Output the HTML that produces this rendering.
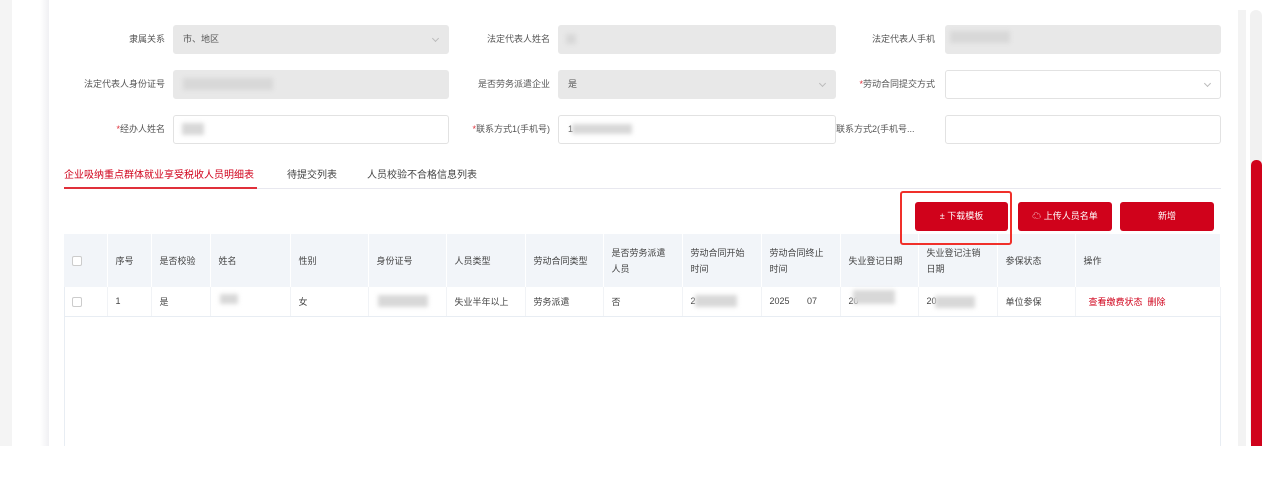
<!DOCTYPE html>
<html><head><meta charset="utf-8"><style>
*{margin:0;padding:0;box-sizing:border-box}
body{width:1280px;height:488px;background:#fff;position:relative;overflow:hidden;font-family:"Liberation Sans","Noto Sans CJK SC",sans-serif;font-size:9px;color:#555}
.a{position:absolute}
.lbl{position:absolute;text-align:right;color:#555;font-size:9px;line-height:28px;white-space:nowrap}
.lbl i{color:#e0303a;font-style:normal}
.inp{position:absolute;height:29px;border:1px solid #e2e2e2;border-radius:3px;background:#fff;font-size:9px;line-height:27px;padding-left:9px;color:#555}
.dis{background:#e8e8e8;border-color:#e8e8e8}
.blur{position:absolute;background:#d8d8d8;filter:blur(2px)}
.arr{position:absolute;right:10px;top:10px;width:5px;height:5px;border-right:1px solid #bbb;border-bottom:1px solid #bbb;transform:rotate(45deg)}
.btn{position:absolute;top:202px;height:29px;background:#d0021b;border-radius:3px;color:#fff;font-size:9px;line-height:29px;text-align:center}
table{position:absolute;left:64px;top:234px;width:1157px;border-collapse:collapse;font-size:9px}
th{background:#f2f5f9;height:53px;text-align:left;font-weight:normal;color:#444;padding-left:8px;border-right:1px solid #fff;line-height:16px}
td{height:29px;padding-left:8px;color:#444;border-bottom:1px solid #e8edf3;border-right:1px solid #f1f3f6}
.cb{display:inline-block;width:10px;height:10px;border:1px solid #ccc;border-radius:2px;background:#fff;vertical-align:middle}
</style></head><body>
<div class="a" style="left:0;top:0;width:12px;height:446px;background:#f4f4f4"></div>
<div class="a" style="left:40px;top:0;width:9px;height:446px;background:linear-gradient(90deg,#fff,#f0f0f3)"></div>
<div class="a" style="left:1238px;top:10px;width:8px;height:436px;background:#f3f3f3"></div>
<div class="a" style="left:1250px;top:10px;width:12px;height:436px;background:#f1f1f1;border-radius:6px"></div>
<div class="a" style="left:1251px;top:160px;width:11px;height:286px;background:#d0021b;border-radius:5px 5px 0 0"></div>

<div class="lbl" style="left:60px;width:105px;top:25px">隶属关系</div>
<div class="inp dis" style="left:173px;top:25px;width:276px">市、地区<span class="arr"></span></div>
<div class="lbl" style="left:440px;width:110px;top:25px">法定代表人姓名</div>
<div class="inp dis" style="left:558px;top:25px;width:278px"></div>
<div class="blur" style="left:566px;top:34px;width:10px;height:10px"></div>
<div class="lbl" style="left:820px;width:115px;top:25px">法定代表人手机</div>
<div class="inp dis" style="left:945px;top:25px;width:276px"></div>
<div class="blur" style="left:950px;top:31px;width:60px;height:12px"></div>

<div class="lbl" style="left:60px;width:105px;top:70px">法定代表人身份证号</div>
<div class="inp dis" style="left:173px;top:70px;width:276px"></div>
<div class="blur" style="left:183px;top:78px;width:90px;height:12px"></div>
<div class="lbl" style="left:440px;width:110px;top:70px">是否劳务派遣企业</div>
<div class="inp dis" style="left:558px;top:70px;width:278px">是<span class="arr"></span></div>
<div class="lbl" style="left:820px;width:115px;top:70px"><i>*</i>劳动合同提交方式</div>
<div class="inp" style="left:945px;top:70px;width:276px"><span class="arr"></span></div>

<div class="lbl" style="left:60px;width:105px;top:115px"><i>*</i>经办人姓名</div>
<div class="inp" style="left:173px;top:115px;width:276px"></div>
<div class="blur" style="left:182px;top:123px;width:22px;height:12px"></div>
<div class="lbl" style="left:440px;width:110px;top:115px"><i>*</i>联系方式1(手机号)</div>
<div class="inp" style="left:558px;top:115px;width:278px">1</div>
<div class="blur" style="left:572px;top:124px;width:60px;height:10px"></div>
<div class="lbl" style="left:836px;width:105px;top:115px;text-align:left">联系方式2(手机号...</div>
<div class="inp" style="left:945px;top:115px;width:276px"></div>

<div class="a" style="left:64px;top:166px;font-size:10px;color:#d0021b">企业吸纳重点群体就业享受税收人员明细表</div>
<div class="a" style="left:287px;top:166px;font-size:10px;color:#444">待提交列表</div>
<div class="a" style="left:367px;top:166px;font-size:10px;color:#444">人员校验不合格信息列表</div>
<div class="a" style="left:64px;top:188px;width:1157px;height:1px;background:#e8e8ef"></div>
<div class="a" style="left:64px;top:187px;width:193px;height:2px;background:#e0303a"></div>

<div class="btn" style="left:915px;width:93px">± 下载模板</div>
<div class="btn" style="left:1018px;width:94px">☁ 上传人员名单</div>
<div class="btn" style="left:1120px;width:94px">新增</div>

<div class="a" style="left:64px;top:234px;width:1157px;height:212px;border:1px solid #e8edf3;border-bottom:none"></div>
<table>
<tr><th style="width:43px"><span class="cb"></span></th><th style="width:44px">序号</th><th style="width:59px">是否校验</th><th style="width:80px">姓名</th><th style="width:78px">性别</th><th style="width:78px">身份证号</th><th style="width:79px">人员类型</th><th style="width:78px">劳动合同类型</th><th style="width:79px">是否劳务派遣<br>人员</th><th style="width:79px">劳动合同开始<br>时间</th><th style="width:79px">劳动合同终止<br>时间</th><th style="width:78px">失业登记日期</th><th style="width:79px">失业登记注销<br>日期</th><th style="width:78px">参保状态</th><th>操作</th></tr>
<tr><td><span class="cb"></span></td><td>1</td><td>是</td><td></td><td>女</td><td></td><td>失业半年以上</td><td>劳务派遣</td><td>否</td><td>2</td><td>2025&nbsp;&nbsp;&nbsp;&nbsp;&nbsp;&nbsp;&nbsp;07</td><td>20</td><td>20</td><td>单位参保</td><td style="color:#d0021b">&nbsp;&nbsp;查看缴费状态&nbsp;&nbsp;删除</td></tr>
</table>
<div class="blur" style="left:220px;top:294px;width:18px;height:10px"></div>
<div class="blur" style="left:378px;top:295px;width:50px;height:12px"></div>
<div class="blur" style="left:695px;top:295px;width:42px;height:12px"></div>
<div class="blur" style="left:853px;top:290px;width:42px;height:14px"></div>
<div class="blur" style="left:935px;top:296px;width:40px;height:12px"></div>
<div class="a" style="left:900px;top:191px;width:112px;height:54px;border:2px solid #f0302a;border-radius:3px;z-index:5"></div>
</body></html>
